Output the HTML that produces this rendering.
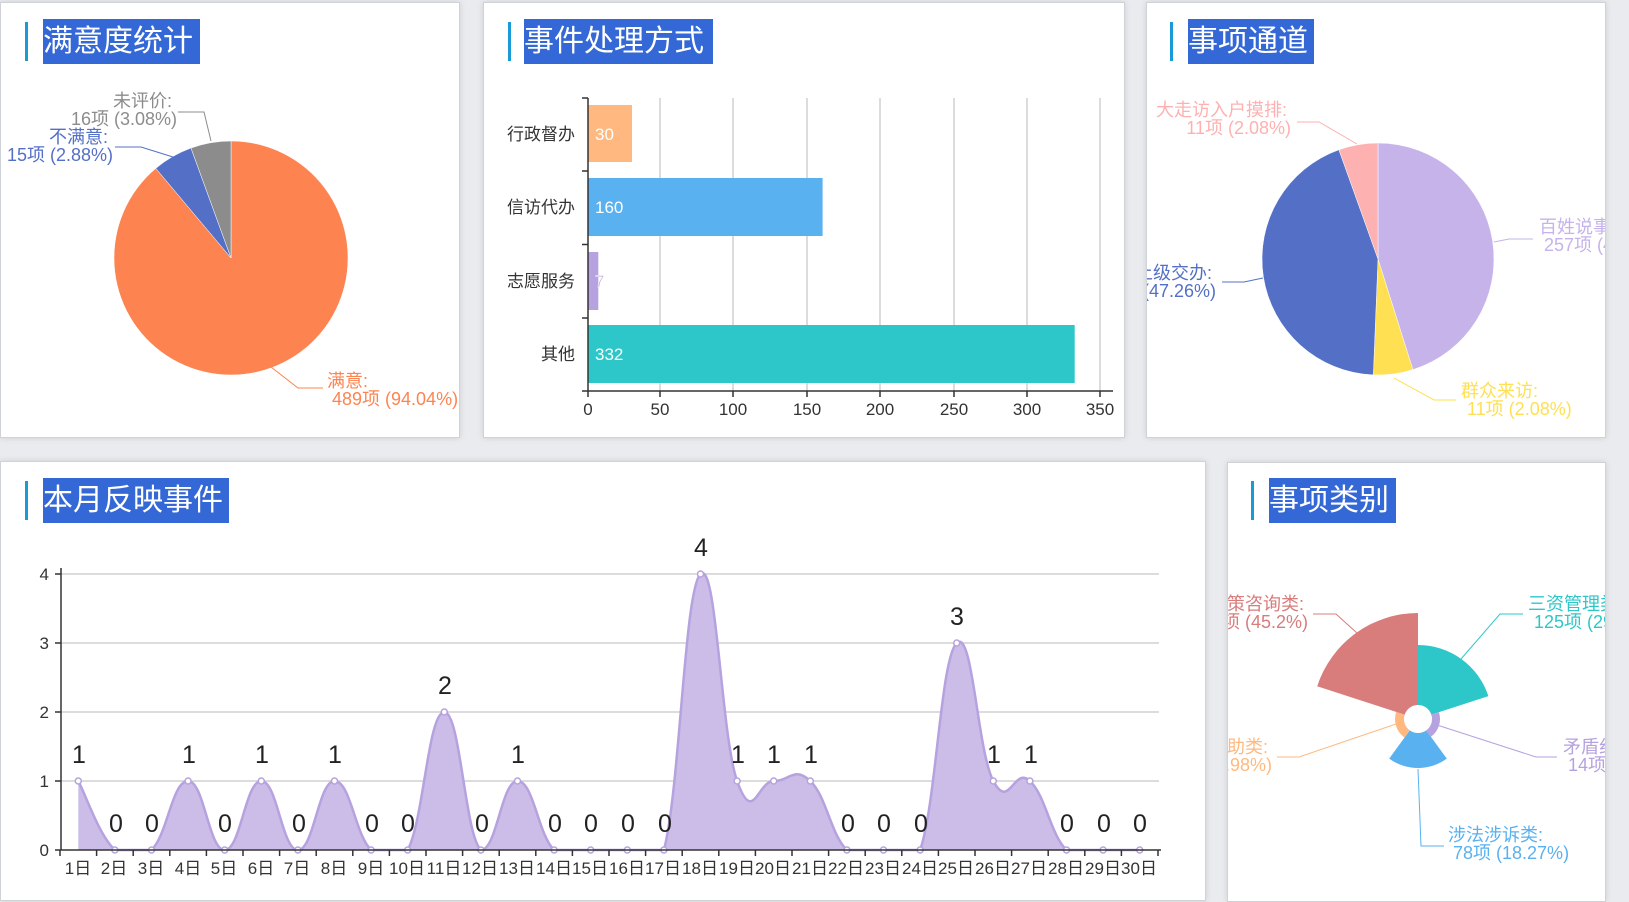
<!DOCTYPE html>
<html><head><meta charset="utf-8">
<style>
html,body{margin:0;padding:0;width:1629px;height:898px;background:#e9ebef;overflow:hidden;font-family:"Liberation Sans","Noto Sans CJK SC",sans-serif;}
.p{position:absolute;background:#fff;border:1px solid #cfd2d6;box-sizing:border-box;overflow:hidden;box-shadow:0 0 6px rgba(0,0,0,0.12);}
.p svg{position:absolute;}
.acc{position:absolute;width:3px;height:39px;background:#1a9bd7;}
.tt{position:absolute;height:45px;background:#3468d6;color:#fff;font-size:30px;line-height:45px;white-space:nowrap;}
text{font-family:"Liberation Sans","Noto Sans CJK SC",sans-serif;}
</style></head><body>

<div class="p" style="left:0;top:2px;width:460px;height:436px;">
<div class="acc" style="left:24px;top:19px"></div><div class="tt" style="left:42px;top:16px;width:157px;">满意度统计</div>
<svg width="1629" height="898" style="left:0;top:-2px" viewBox="0 0 1629 898">
<path id="a1" fill="#fd8451" stroke="#fff" stroke-width="0.5"/><path id="a2" fill="#5470c6" stroke="#fff" stroke-width="0.5"/><path id="a3" fill="#8c8c8c" stroke="#fff" stroke-width="0.5"/>
<polyline points="177,111 203,111 210,140" fill="none" stroke="#8c8c8c"/>
<polyline points="114,146 140,146 172,156" fill="none" stroke="#5470c6"/>
<polyline points="270,366 297,387 322,387" fill="none" stroke="#fd8451"/>
<g font-size="18">
<text x="171" y="106" fill="#8c8c8c" text-anchor="end">未评价:</text>
<text x="176" y="124" fill="#8c8c8c" text-anchor="end">16项 (3.08%)</text>
<text x="107" y="142" fill="#5470c6" text-anchor="end">不满意:</text>
<text x="112" y="160" fill="#5470c6" text-anchor="end">15项 (2.88%)</text>
<text x="326" y="386" fill="#fd8451">满意:</text>
<text x="331" y="404" fill="#fd8451">489项 (94.04%)</text>
</g></svg></div>

<div class="p" style="left:483px;top:2px;width:642px;height:436px;">
<div class="acc" style="left:24px;top:19px"></div><div class="tt" style="left:40px;top:16px;width:189px;">事件处理方式</div>
<svg width="1629" height="898" style="left:-483px;top:-2px" viewBox="0 0 1629 898">
<g stroke="#d0d0d0" stroke-width="1.5">
<line x1="659" y1="97" x2="659" y2="390"/><line x1="732" y1="97" x2="732" y2="390"/><line x1="806" y1="97" x2="806" y2="390"/><line x1="879" y1="97" x2="879" y2="390"/><line x1="953" y1="97" x2="953" y2="390"/><line x1="1026" y1="97" x2="1026" y2="390"/><line x1="1099" y1="97" x2="1099" y2="390"/>
</g>
<rect x="587" y="104" width="44" height="57" fill="#ffb980"/>
<rect x="587" y="177" width="234.6" height="58" fill="#5ab1ef"/>
<rect x="587" y="251" width="10.3" height="58" fill="#b6a2de"/>
<rect x="587" y="324" width="486.7" height="58" fill="#2ec7c9"/>
<g stroke="#333" stroke-width="1.5">
<line x1="587" y1="97" x2="587" y2="390"/><line x1="581" y1="97" x2="587" y2="97"/><line x1="581" y1="170" x2="587" y2="170"/><line x1="581" y1="243.5" x2="587" y2="243.5"/><line x1="581" y1="317" x2="587" y2="317"/>
<line x1="581" y1="390" x2="1112" y2="390"/>
<line x1="587" y1="390" x2="587" y2="396"/><line x1="659" y1="390" x2="659" y2="396"/><line x1="732" y1="390" x2="732" y2="396"/><line x1="806" y1="390" x2="806" y2="396"/><line x1="879" y1="390" x2="879" y2="396"/><line x1="953" y1="390" x2="953" y2="396"/><line x1="1026" y1="390" x2="1026" y2="396"/><line x1="1099" y1="390" x2="1099" y2="396"/>
</g>
<g font-size="17" fill="#333" text-anchor="end">
<text x="574" y="139">行政督办</text><text x="574" y="212">信访代办</text><text x="574" y="286">志愿服务</text><text x="574" y="359">其他</text>
</g>
<g font-size="17" fill="#fff">
<text x="594" y="139">30</text><text x="594" y="212">160</text><text x="594" y="359">332</text>
<text x="594" y="286" fill="#b6a2de" stroke="#fff" stroke-width="0.6">7</text>
</g>
<g font-size="17" fill="#333" text-anchor="middle">
<text x="587" y="414">0</text><text x="659" y="414">50</text><text x="732" y="414">100</text><text x="806" y="414">150</text><text x="879" y="414">200</text><text x="953" y="414">250</text><text x="1026" y="414">300</text><text x="1099" y="414">350</text>
</g></svg></div>

<div class="p" style="left:1146px;top:2px;width:460px;height:436px;">
<div class="acc" style="left:23px;top:19px"></div><div class="tt" style="left:41px;top:16px;width:126px;">事项通道</div>
<svg width="1629" height="898" style="left:-1146px;top:-2px" viewBox="0 0 1629 898">
<path id="b1" fill="#c6b3ea" stroke="#fff" stroke-width="0.5"/><path id="b2" fill="#ffe052" stroke="#fff" stroke-width="0.5"/><path id="b3" fill="#5470c6" stroke="#fff" stroke-width="0.5"/><path id="b4" fill="#fdb1b1" stroke="#fff" stroke-width="0.5"/>
<polyline points="1296,121 1318,121 1356,143" fill="none" stroke="#fdb1b1"/>
<polyline points="1493,241 1508,238 1532,238" fill="none" stroke="#c6b3ea"/>
<polyline points="1221,281 1243,281 1262,277" fill="none" stroke="#5470c6"/>
<polyline points="1393,377 1433,399 1455,399" fill="none" stroke="#ffe052"/>
<g font-size="18">
<text x="1286" y="115" fill="#fdb1b1" text-anchor="end">大走访入户摸排:</text>
<text x="1290" y="133" fill="#fdb1b1" text-anchor="end">11项 (2.08%)</text>
<text x="1538" y="232" fill="#c6b3ea">百姓说事:</text>
<text x="1543" y="250" fill="#c6b3ea">257项 (48.31%)</text>
<text x="1211" y="278" fill="#5470c6" text-anchor="end">上级交办:</text>
<text x="1215" y="296" fill="#5470c6" text-anchor="end">251项 (47.26%)</text>
<text x="1460" y="396" fill="#ffe052">群众来访:</text>
<text x="1466" y="414" fill="#ffe052">11项 (2.08%)</text>
</g></svg></div>

<div class="p" style="left:0;top:461px;width:1206px;height:440px;">
<div class="acc" style="left:24px;top:19px"></div><div class="tt" style="left:42px;top:16px;width:186px;">本月反映事件</div>
<svg width="1629" height="898" style="left:0;top:-461px" viewBox="0 0 1629 898">
<g stroke="#d0d0d0" stroke-width="1.5">
<line x1="60" y1="573" x2="1158" y2="573"/><line x1="60" y1="642" x2="1158" y2="642"/><line x1="60" y1="711" x2="1158" y2="711"/><line x1="60" y1="780" x2="1158" y2="780"/>
</g>
<path id="area" fill="#cbbde8" stroke="none"/>
<path id="line" fill="none" stroke="#b6a2de" stroke-width="2.5"/>
<g id="pts" fill="#fff" stroke="#b6a2de" stroke-width="1.5"></g>
<g stroke="#333" stroke-width="1.5">
<line x1="60" y1="567" x2="60" y2="849"/><line x1="54" y1="573" x2="60" y2="573"/><line x1="54" y1="642" x2="60" y2="642"/><line x1="54" y1="711" x2="60" y2="711"/><line x1="54" y1="780" x2="60" y2="780"/>
<line x1="54" y1="849" x2="1160" y2="849"/>
</g>
<g id="xt" stroke="#333" stroke-width="1.5"></g>
<g font-size="17" fill="#333" text-anchor="end">
<text x="48" y="579">4</text><text x="48" y="648">3</text><text x="48" y="717">2</text><text x="48" y="786">1</text><text x="48" y="855">0</text>
</g>
<g font-size="17" fill="#333" text-anchor="middle">
<text x="77" y="873">1日</text><text x="113" y="873">2日</text><text x="150" y="873">3日</text><text x="187" y="873">4日</text><text x="223" y="873">5日</text><text x="260" y="873">6日</text><text x="296" y="873">7日</text><text x="333" y="873">8日</text><text x="370" y="873">9日</text><text x="406" y="873">10日</text><text x="443" y="873">11日</text><text x="479" y="873">12日</text><text x="516" y="873">13日</text><text x="553" y="873">14日</text><text x="589" y="873">15日</text><text x="626" y="873">16日</text><text x="662" y="873">17日</text><text x="699" y="873">18日</text><text x="736" y="873">19日</text><text x="772" y="873">20日</text><text x="809" y="873">21日</text><text x="845" y="873">22日</text><text x="882" y="873">23日</text><text x="919" y="873">24日</text><text x="955" y="873">25日</text><text x="992" y="873">26日</text><text x="1028" y="873">27日</text><text x="1065" y="873">28日</text><text x="1102" y="873">29日</text><text x="1138" y="873">30日</text>
</g>
<g font-size="25" fill="#222" text-anchor="middle">
<text x="78" y="762">1</text><text x="115" y="831">0</text><text x="151" y="831">0</text><text x="188" y="762">1</text><text x="224" y="831">0</text><text x="261" y="762">1</text><text x="298" y="831">0</text><text x="334" y="762">1</text><text x="371" y="831">0</text><text x="407" y="831">0</text><text x="444" y="693">2</text><text x="481" y="831">0</text><text x="517" y="762">1</text><text x="554" y="831">0</text><text x="590" y="831">0</text><text x="627" y="831">0</text><text x="664" y="831">0</text><text x="700" y="555">4</text><text x="737" y="762">1</text><text x="773" y="762">1</text><text x="810" y="762">1</text><text x="847" y="831">0</text><text x="883" y="831">0</text><text x="920" y="831">0</text><text x="956" y="624">3</text><text x="993" y="762">1</text><text x="1030" y="762">1</text><text x="1066" y="831">0</text><text x="1103" y="831">0</text><text x="1139" y="831">0</text>
</g></svg></div>

<div class="p" style="left:1227px;top:462px;width:379px;height:440px;">
<div class="acc" style="left:23px;top:18px"></div><div class="tt" style="left:41px;top:15px;width:127px;">事项类别</div>
<svg width="1629" height="898" style="left:-1227px;top:-462px" viewBox="0 0 1629 898">
<path id="c1" fill="#2ec7c9"/><path id="c2" fill="#b6a2de"/><path id="c3" fill="#5ab1ef"/><path id="c4" fill="#ffb980"/><path id="c5" fill="#d87c7c"/>
<polyline points="1312,613 1335,613 1356,632" fill="none" stroke="#d87c7c"/>
<polyline points="1522,613 1499,613 1460,658" fill="none" stroke="#2ec7c9"/>
<polyline points="1276,756 1298,756 1395,723" fill="none" stroke="#ffb980"/>
<polyline points="1436,724 1535,756 1556,756" fill="none" stroke="#b6a2de"/>
<polyline points="1417,768 1420,845 1443,845" fill="none" stroke="#5ab1ef"/>
<g font-size="18">
<text x="1303" y="609" fill="#d87c7c" text-anchor="end">政策咨询类:</text>
<text x="1307" y="627" fill="#d87c7c" text-anchor="end">193项 (45.2%)</text>
<text x="1527" y="609" fill="#2ec7c9">三资管理类:</text>
<text x="1533" y="627" fill="#2ec7c9">125项 (29.27%)</text>
<text x="1267" y="752" fill="#ffb980" text-anchor="end">帮助类:</text>
<text x="1271" y="770" fill="#ffb980" text-anchor="end">17项 (3.98%)</text>
<text x="1562" y="752" fill="#b6a2de">矛盾纠纷类:</text>
<text x="1567" y="770" fill="#b6a2de">14项 (3.28%)</text>
<text x="1447" y="840" fill="#5ab1ef">涉法涉诉类:</text>
<text x="1452" y="858" fill="#5ab1ef">78项 (18.27%)</text>
</g></svg></div>

<script>
function P(cx,cy,r,a){a=(a-90)*Math.PI/180;return [cx+r*Math.cos(a),cy+r*Math.sin(a)];}
function sl(id,cx,cy,r,a0,a1,r0){var s=P(cx,cy,r,a0),e=P(cx,cy,r,a1),L=(a1-a0)>180?1:0,d;
if(r0){var s0=P(cx,cy,r0,a1),e0=P(cx,cy,r0,a0);d="M"+s+" A"+r+","+r+" 0 "+L+" 1 "+e+" L"+s0+" A"+r0+","+r0+" 0 "+L+" 0 "+e0+"Z";}
else d="M"+cx+","+cy+" L"+s+" A"+r+","+r+" 0 "+L+" 1 "+e+"Z";
document.getElementById(id).setAttribute("d",d);}
sl("a1",230,257,117,0,320);sl("a2",230,257,117,320,340);sl("a3",230,257,117,340,360);
sl("b1",1377,258,116,0,162.5);sl("b2",1377,258,116,162.5,182.3);sl("b3",1377,258,116,182.3,340.3);sl("b4",1377,258,116,340.3,360);
sl("c1",1417,718,74,0,72,14);sl("c2",1417,718,22,72,144,14);sl("c3",1417,718,49,144,216,14);sl("c4",1417,718,23,216,288,14);sl("c5",1417,718,106,288,360,14);
var v=[1,0,0,1,0,1,0,1,0,0,2,0,1,0,0,0,0,4,1,1,1,0,0,0,3,1,1,0,0,0];
var pts=v.map(function(y,i){return [60+36.6*(i+0.5)-1,849-69*y];});
var d="M"+pts[0],s=0.22;
for(var i=0;i<pts.length-1;i++){var p0=pts[Math.max(i-1,0)],p1=pts[i],p2=pts[i+1],p3=pts[Math.min(i+2,pts.length-1)];
var c1=[p1[0]+(p2[0]-p0[0])*s,p1[1]+(p2[1]-p0[1])*s],c2=[p2[0]-(p3[0]-p1[0])*s,p2[1]-(p3[1]-p1[1])*s];
c1[1]=Math.min(c1[1],849);c2[1]=Math.min(c2[1],849);
d+=" C"+c1+" "+c2+" "+p2;}
document.getElementById("line").setAttribute("d",d);
document.getElementById("area").setAttribute("d",d+" L"+pts[29][0]+",849 L"+pts[0][0]+",849Z");
var g=document.getElementById("pts"),h="";pts.forEach(function(p){h+='<circle cx="'+p[0]+'" cy="'+p[1]+'" r="3"/>';});
g.innerHTML=h;var xt="";for(var k=0;k<=30;k++){var x=60+36.6*k-1;xt+='<line x1="'+x+'" y1="849" x2="'+x+'" y2="855"/>';}
document.getElementById("xt").innerHTML=xt;
</script>
</body></html>
